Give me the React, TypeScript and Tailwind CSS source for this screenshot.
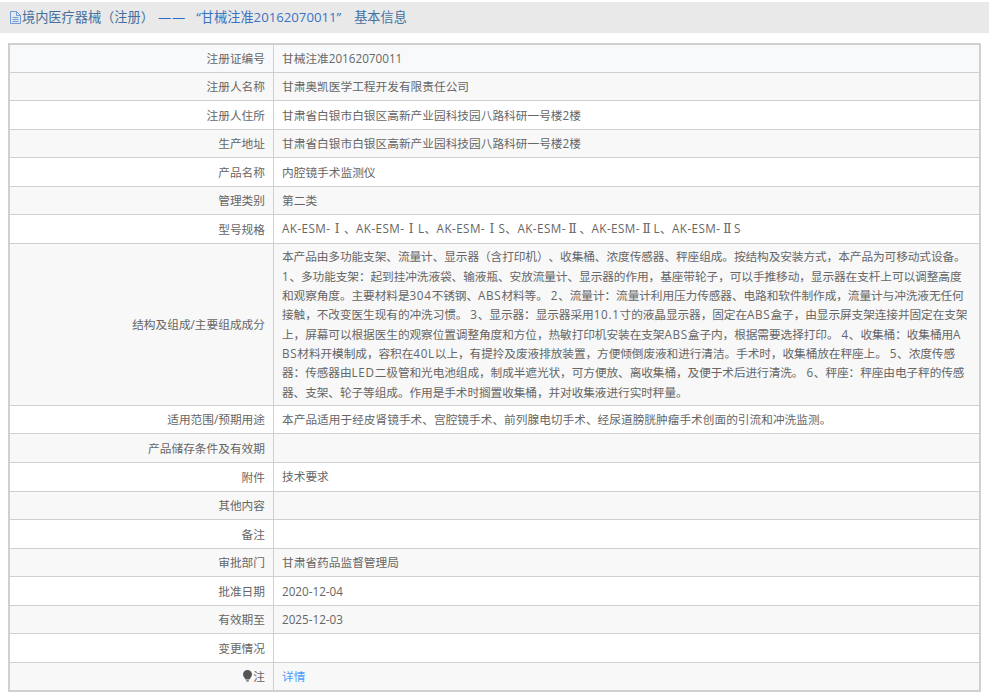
const ROMAN = /([ⅠⅡ])/
const LATIN = /([A-Za-z0-9.]+)/

const rows: { label: string; value?: string }[] = [
  { label: '注册证编号', value: '甘械注准20162070011' },
  { label: '注册人名称', value: '甘肃奥凯医学工程开发有限责任公司' },
  { label: '注册人住所', value: '甘肃省白银市白银区高新产业园科技园八路科研一号楼2楼' },
  { label: '生产地址', value: '甘肃省白银市白银区高新产业园科技园八路科研一号楼2楼' },
  { label: '产品名称', value: '内腔镜手术监测仪' },
  { label: '管理类别', value: '第二类' },
  { label: '型号规格', value: 'AK-ESM-Ⅰ、AK-ESM-ⅠL、AK-ESM-ⅠS、AK-ESM-Ⅱ、AK-ESM-ⅡL、AK-ESM-ⅡS' },
  {
    label: '结构及组成/主要组成成分',
    value:
      '本产品由多功能支架、流量计、显示器（含打印机）、收集桶、浓度传感器、秤座组成。按结构及安装方式，本产品为可移动式设备。 1、多功能支架：起到挂冲洗液袋、输液瓶、安放流量计、显示器的作用，基座带轮子，可以手推移动，显示器在支杆上可以调整高度和观察角度。主要材料是304不锈钢、ABS材料等。 2、流量计：流量计利用压力传感器、电路和软件制作成，流量计与冲洗液无任何接触，不改变医生现有的冲洗习惯。 3、显示器：显示器采用10.1寸的液晶显示器，固定在ABS盒子，由显示屏支架连接并固定在支架上，屏幕可以根据医生的观察位置调整角度和方位，热敏打印机安装在支架ABS盒子内，根据需要选择打印。 4、收集桶：收集桶用ABS材料开模制成，容积在40L以上，有提拎及废液排放装置，方便倾倒废液和进行清洁。手术时，收集桶放在秤座上。 5、浓度传感器：传感器由LED二极管和光电池组成，制成半遮光状，可方便放、离收集桶，及便于术后进行清洗。 6、秤座：秤座由电子秤的传感器、支架、轮子等组成。作用是手术时搁置收集桶，并对收集液进行实时秤量。',
  },
  { label: '适用范围/预期用途', value: '本产品适用于经皮肾镜手术、宫腔镜手术、前列腺电切手术、经尿道膀胱肿瘤手术创面的引流和冲洗监测。' },
  { label: '产品储存条件及有效期' },
  { label: '附件', value: '技术要求' },
  { label: '其他内容' },
  { label: '备注' },
  { label: '审批部门', value: '甘肃省药品监督管理局' },
  { label: '批准日期', value: '2020-12-04' },
  { label: '有效期至', value: '2025-12-03' },
  { label: '变更情况' },
]

function DocIcon() {
  return (
    <svg width="11" height="13" viewBox="0 0 11 13" fill="none" stroke="#6f9bd6" strokeWidth="1" className="mr-[1px]">
      <path d="M.5 .5h6l4 4v8h-10z" />
      <path d="M6.500 .5v4h4M2.500 6.500h6M2.500 8.500h6M2.500 10.500h6" />
    </svg>
  )
}

function BulbIcon() {
  return (
    <svg width="9" height="12" viewBox="0 0 9 12" fill="#555" className="inline-block mr-px align-[-1px]">
      <path d="M4.500 0a4.500 4.500 0 0 1 4.500 4.500c0 1.800-1.600 3-2.600 5H2.600C1.600 7.500 0 6.300 0 4.500A4.500 4.500 0 0 1 4.500 0z" />
      <path d="M3.200 10.300h2.600v1.200H3.200z" />
    </svg>
  )
}

// the roman numerals sit in a full-width serif cell in the original
function CellText({ text }: { text: string }) {
  return (
    <>
      {text.split(ROMAN).map((part, i) =>
        part === 'Ⅰ' || part === 'Ⅱ' ? (
          <span key={i} className="inline-block w-[13.5px] text-center tracking-normal font-['DejaVu_Serif',serif] text-[12px]">
            {part}
          </span>
        ) : (
          part
        ),
      )}
    </>
  )
}

// latin runs are a little wider in the original's font, which moves the line breaks
function LongText({ text }: { text: string }) {
  return (
    <>
      {text.split(LATIN).map((part, i) =>
        i % 2 === 1 ? (
          <span key={i} className="tracking-[0.7px]">
            {part}
          </span>
        ) : (
          part
        ),
      )}
    </>
  )
}

function rowBg(i: number) {
  if (i === 0) return 'bg-[#f8f9fb]'
  return i % 2 === 1 ? 'bg-[#f8f8f8]' : 'bg-white'
}

export default function App() {
  return (
    <div className="w-[989px] h-[696px] overflow-hidden bg-white text-[11.7px] text-[#666] [text-spacing-trim:space-all] font-['Open_Sans','Noto_Sans_CJK_SC',sans-serif]">
      <div className="mt-[2px] h-[31px] bg-[#e9e9e9] flex items-center pl-[10px] text-[13.2px] whitespace-pre">
        <DocIcon />
        <span className="text-[#46709f]">境内医疗器械（注册）</span>
        <span className="ml-[4px] text-[#2b6cc4] tracking-[1px]">——</span>
        <span className="ml-[10px] text-[#3a72c4]">“甘械注准20162070011”</span>
        <span className="ml-[13px] text-[#46709f]">基本信息</span>
      </div>
      <div className="px-[8px] pt-[9.5px]">
        <table className="w-[973px] table-fixed border-collapse border-2 border-[#d0d0d0]">
          <colgroup>
            <col className="w-[264.5px]" />
            <col />
          </colgroup>
          <tbody>
            {rows.map((r, i) => (
              <tr key={r.label} className={rowBg(i)}>
                <td className="h-[28.57px] border border-[#d0d0d0] px-[8px] pt-[1px] text-right leading-[19.3px]">{r.label}</td>
                <td
                  className={`h-[28.57px] border border-[#d0d0d0] pl-[8px] pt-[3.5px] pb-[3px] leading-[19.3px] break-all ${
                    i === 7 ? 'pr-[11.5px] tracking-[-0.1px]' : i === 6 ? 'pr-[8px] tracking-[0.42px]' : 'pr-[8px]'
                  }`}
                >
                  {r.value && (i === 7 ? <LongText text={r.value} /> : <CellText text={r.value} />)}
                </td>
              </tr>
            ))}
            <tr className="bg-[#f8f8f8]">
              <td className="h-[28.57px] border border-[#d0d0d0] px-[8px] text-right leading-[19.3px]">
                <BulbIcon />注
              </td>
              <td className="h-[28.57px] border border-[#d0d0d0] px-[8px] pt-[1px] leading-[19.3px]">
                <a className="text-[#4c9dfa]">详情</a>
              </td>
            </tr>
          </tbody>
        </table>
      </div>
    </div>
  )
}
